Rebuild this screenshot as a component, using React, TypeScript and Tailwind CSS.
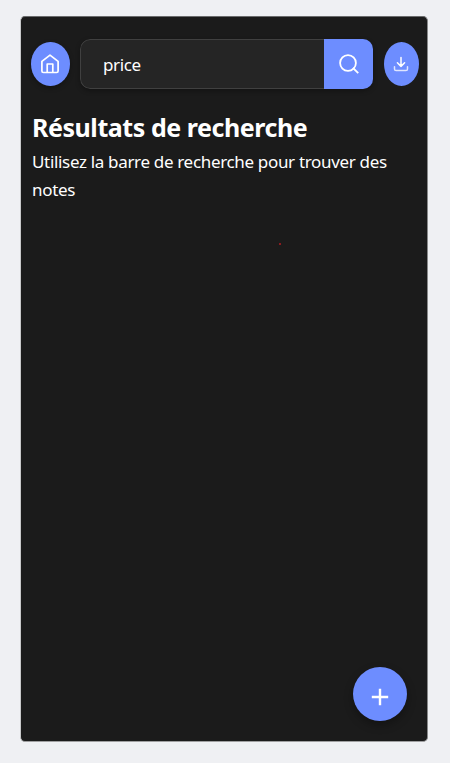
import React from 'react';

function HomeIcon() {
  return (
    <svg width="20" height="20" viewBox="0 0 20 20" fill="none" stroke="#fff" strokeWidth="1.7" strokeLinejoin="round">
      <path d="M1.9 7.4 10 1.1l8.1 6.3v9.6c0 .9-.6 1.5-1.5 1.5H3.4c-.9 0-1.5-.6-1.5-1.5z" />
      <path d="M7.2 18.5V10h5.6v8.5" />
    </svg>
  );
}

function SearchIcon() {
  return (
    <svg width="20" height="20" viewBox="0 0 20 20" fill="none" stroke="#fff" strokeWidth="1.8">
      <circle cx="9" cy="9" r="7.9" />
      <path d="m14.5 14.5 4.1 4.1" strokeLinecap="square" />
    </svg>
  );
}

function DownloadIcon() {
  return (
    <svg width="16" height="16" viewBox="0 0 16 16" fill="none" stroke="#fff" strokeWidth="1.5" strokeLinecap="round" strokeLinejoin="round">
      <path d="M8 1.4v9M4.4 6.8 8 10.4l3.6-3.6" />
      <path d="M1.5 10.8v2.1c0 .9.7 1.6 1.6 1.6h9.8c.9 0 1.6-.7 1.6-1.6v-2.1" stroke="#dfe5ff" />
    </svg>
  );
}

export default function App() {
  return (
    <div className="h-[763px] w-[450px] overflow-hidden bg-[#eff0f3] pl-5 pt-4 font-['Noto_Sans','Open_Sans',sans-serif] text-white">
      <main className="flex h-[726px] w-[408px] flex-col rounded-[5px] border border-b-[#a0a0a1] border-l-[#c8c9ca] border-r-[#88898a] border-t-[#6a6b6c] bg-[#1b1b1b]">
        <header className="mt-[22px] flex h-[50px] items-center pl-[10.3px]">
          <button aria-label="Accueil" className="flex h-11 w-[38.4px] shrink-0 items-center justify-center rounded-[50%] bg-[#6d8dff] shadow-[0_2px_5px_rgba(0,0,0,0.3)]">
            <HomeIcon />
          </button>
          <form className="ml-[10.8px] flex h-[50px] w-[293px] shrink-0 overflow-hidden rounded-[10px] shadow-[0_2px_5px_rgba(0,0,0,0.3)]">
            <div className="flex w-[243.5px] items-center rounded-l-[10px] border border-r-0 border-[#404040] bg-[#252525] pl-[21.5px] pt-[2px] text-[17px] tracking-[-0.35px]">
              price
            </div>
            <button type="button" aria-label="Rechercher" className="flex w-[49.5px] items-center justify-center bg-[#6d8dff]">
              <SearchIcon />
            </button>
          </form>
          <button aria-label="Télécharger" className="ml-[10.5px] flex h-11 w-[35px] shrink-0 items-center justify-center rounded-[50%] bg-[#6d8dff] pr-px">
            <DownloadIcon />
          </button>
        </header>
        <section className="pl-[11px] pt-[21px]">
          <h1 className="whitespace-nowrap text-[25px] font-bold leading-[34px] tracking-[-0.44px]">Résultats de recherche</h1>
          <p className="whitespace-nowrap pt-[4px] text-[17px] leading-7 tracking-[-0.33px]">
            Utilisez la barre de recherche pour trouver des
            <br />
            notes
          </p>
        </section>
        <div className="ml-[258px] mt-[39px] h-0.5 w-0.5 shrink-0 bg-[#8a1c20]" />
        <button aria-label="Ajouter" className="mb-5 mr-[20px] mt-auto flex h-[54px] w-[54px] items-center justify-center self-end rounded-full bg-[#6d8dff] pt-[6px] shadow-[0_4px_10px_rgba(0,0,0,0.3)]">
          <svg width="18" height="18" viewBox="0 0 18 18" stroke="#fff" strokeWidth="2.4">
            <path d="M9 .8v16.4M.8 9h16.4" />
          </svg>
        </button>
      </main>
    </div>
  );
}
